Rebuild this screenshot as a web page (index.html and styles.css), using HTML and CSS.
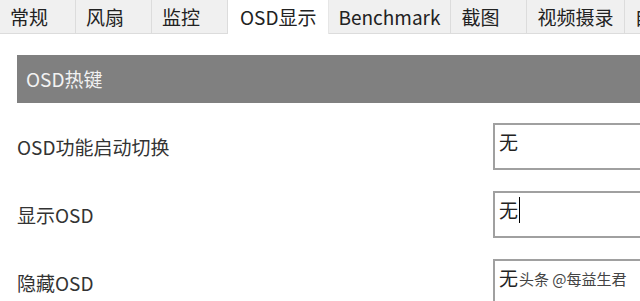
FILE: index.html
```html
<!DOCTYPE html>
<html lang="zh-CN">
<head>
    <meta charset="UTF-8">
    <meta name="viewport" content="width=device-width, initial-scale=1.0">
    <title>OSD显示</title>
    <link rel="stylesheet" href="styles.css">
</head>
<body>
    <div class="window">
        <div class="tabs">
            <div class="tab">常规</div>
            <div class="tab">风扇</div>
            <div class="tab">监控</div>
            <div class="tab active">OSD显示</div>
            <div class="tab">Benchmark</div>
            <div class="tab">截图</div>
            <div class="tab">视频摄录</div>
            <div class="tab">自动</div>
        </div>

        <div class="content">
            <div class="section-title">OSD热键</div>

            <div class="row">
                <label class="row-label">OSD功能启动切换</label>
                <div class="hotkey">无</div>
            </div>
            <div class="row">
                <label class="row-label">显示OSD</label>
                <div class="hotkey">无<span class="caret"></span></div>
            </div>
            <div class="row">
                <label class="row-label">隐藏OSD</label>
                <div class="hotkey">无</div>
            </div>
        </div>

        <div class="watermark">头条 @每益生君</div>
    </div>
</body>
</html>
```

FILE: styles.css
```css
body {
    margin: 0;
    padding: 0;
    background-color: #ffffff;
    font-family: "Noto Sans CJK SC", "Noto Sans", sans-serif;
    color: #333;
    overflow: hidden;
}
.window {
    position: relative;
    width: 640px;
    height: 301px;
    overflow: hidden;
}
.tabs {
    display: flex;
    height: 33px;
    border-bottom: 1px solid #dcdcdc;
    white-space: nowrap;
}
.tab {
    flex: none;
    box-sizing: border-box;
    min-width: 76px;
    height: 33px;
    padding: 0 10px;
    line-height: 33px;
    font-size: 19px;
    color: #222;
    background-color: #f0f0f0;
    border-right: 1px solid #dcdcdc;
}
.tab.active {
    background-color: #ffffff;
    height: 34px;
    padding: 0 11px 0 12px;
    border-right: 1px solid #e6e6e6;
}
.content {
    padding-left: 17px;
}
.section-title {
    margin-top: 21px;
    margin-bottom: 9px;
    height: 48px;
    line-height: 48px;
    padding-left: 9px;
    background-color: #808080;
    color: #f2f2f2;
    font-size: 19px;
}
.row {
    display: flex;
    align-items: center;
    height: 68px;
}
.row-label {
    flex: none;
    width: 476px;
    font-size: 19px;
    color: #333;
}
.hotkey {
    flex: none;
    box-sizing: border-box;
    width: 200px;
    height: 47px;
    padding: 4px 4px;
    border: 2px solid #a0a0a0;
    font-size: 19px;
    line-height: 26px;
    color: #222;
}
.caret {
    display: inline-block;
    width: 1px;
    height: 26px;
    margin-left: 1px;
    vertical-align: top;
    background-color: #000;
}
.watermark {
    position: absolute;
    left: 519px;
    top: 268px;
    font-size: 15px;
    color: #444;
    text-shadow: 0 0 2px #fff;
}
```
